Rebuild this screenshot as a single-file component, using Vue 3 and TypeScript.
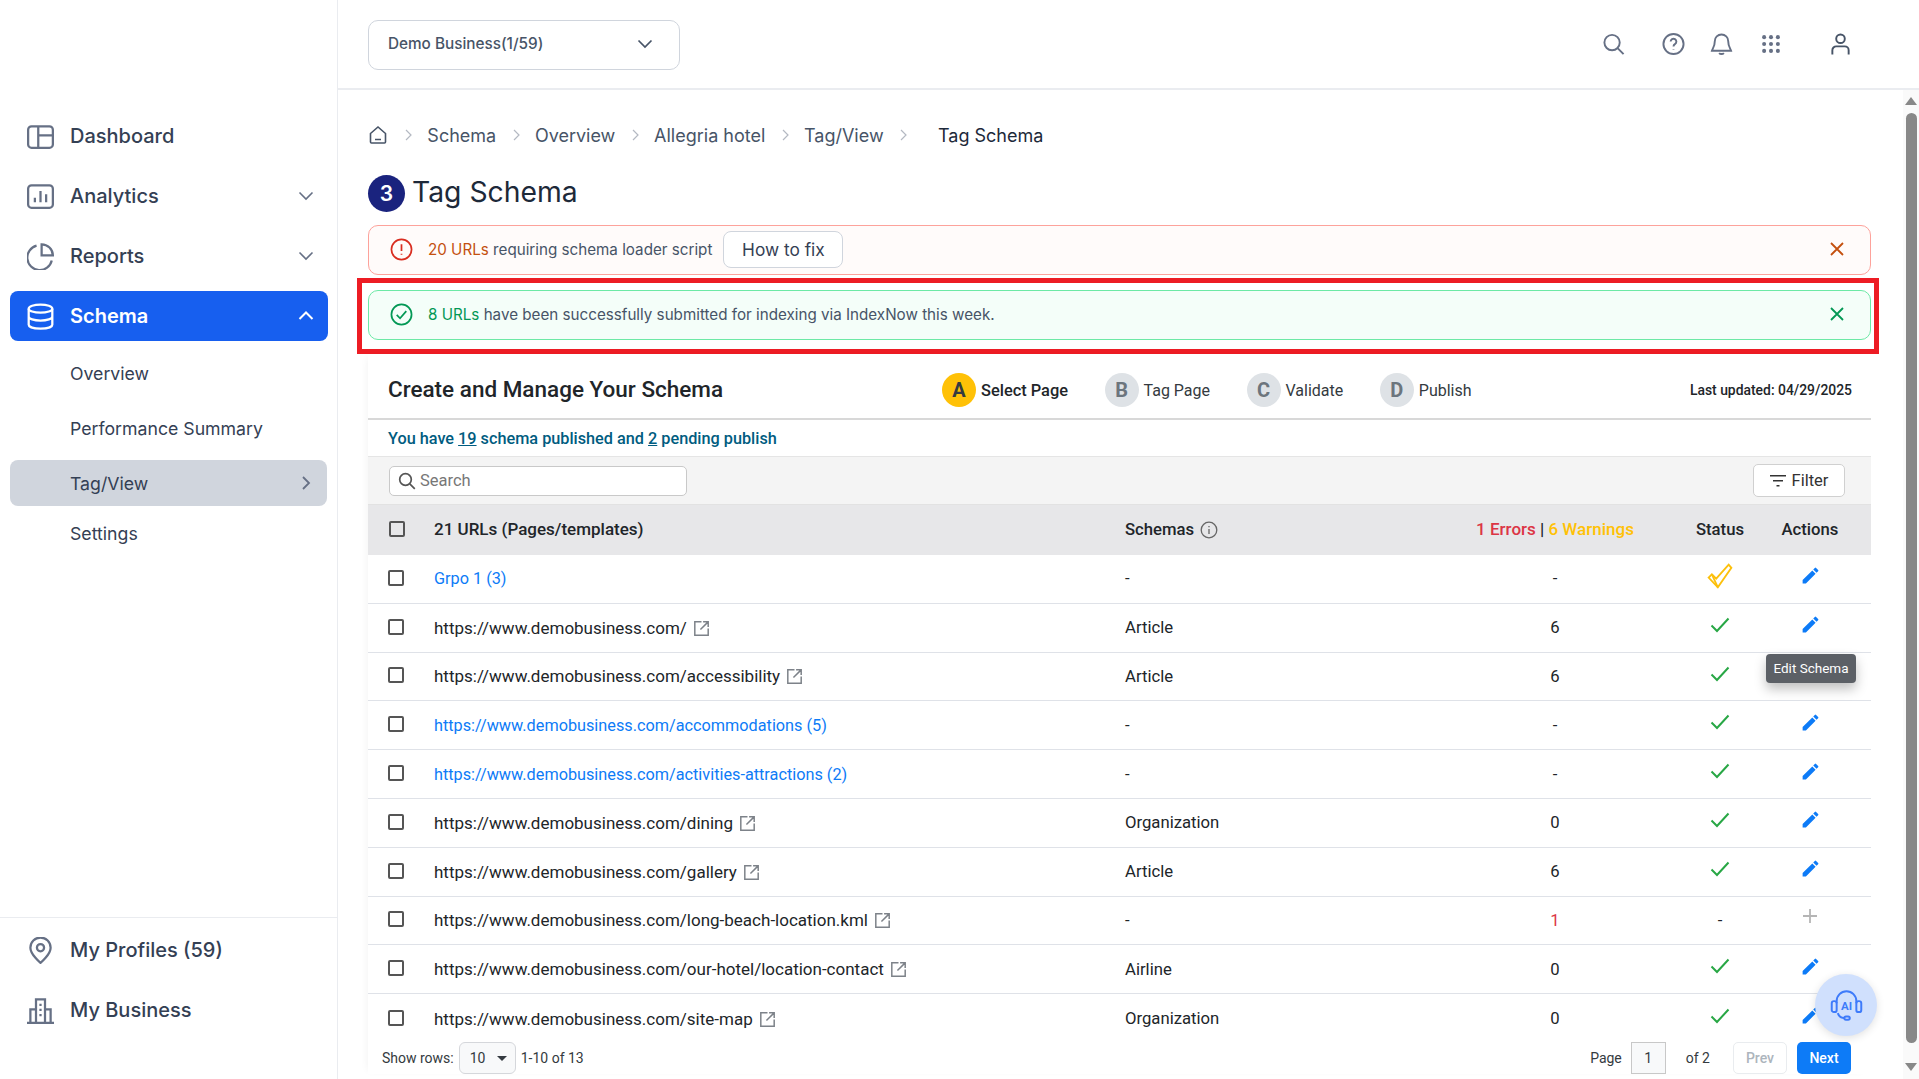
<script setup lang="ts">
interface Row {
  url: string
  link?: boolean
  ext?: boolean
  schema: string
  count: string
  countRed?: boolean
  status: 'ok' | 'warn' | 'none'
  action: 'edit' | 'add'
  tip?: boolean
}
const base = 'https://www.demobusiness.com'
const rows: Row[] = [
  { url: 'Grpo 1 (3)', link: true, schema: '-', count: '-', status: 'warn', action: 'edit' },
  { url: base + '/', ext: true, schema: 'Article', count: '6', status: 'ok', action: 'edit' },
  { url: base + '/accessibility', ext: true, schema: 'Article', count: '6', status: 'ok', action: 'edit', tip: true },
  { url: base + '/accommodations (5)', link: true, schema: '-', count: '-', status: 'ok', action: 'edit' },
  { url: base + '/activities-attractions (2)', link: true, schema: '-', count: '-', status: 'ok', action: 'edit' },
  { url: base + '/dining', ext: true, schema: 'Organization', count: '0', status: 'ok', action: 'edit' },
  { url: base + '/gallery', ext: true, schema: 'Article', count: '6', status: 'ok', action: 'edit' },
  { url: base + '/long-beach-location.kml', ext: true, schema: '-', count: '1', countRed: true, status: 'none', action: 'add' },
  { url: base + '/our-hotel/location-contact', ext: true, schema: 'Airline', count: '0', status: 'ok', action: 'edit' },
  { url: base + '/site-map', ext: true, schema: 'Organization', count: '0', status: 'ok', action: 'edit' },
]
const crumbs = ['Schema', 'Overview', 'Allegria hotel', 'Tag/View']
const steps = [
  { k: 'A', t: 'Select Page', on: true },
  { k: 'B', t: 'Tag Page', on: false },
  { k: 'C', t: 'Validate', on: false },
  { k: 'D', t: 'Publish', on: false },
]
</script>

<template>
  <div class="app">
    <svg class="defs" width="0" height="0" aria-hidden="true">
      <defs>
        <symbol id="pencil" viewBox="0 0 24 24"><path fill="#0d7bf7" d="M3 17.25V21h3.75L17.81 9.94l-3.75-3.75L3 17.25zM20.71 7.04a1 1 0 0 0 0-1.41l-2.34-2.34a1 1 0 0 0-1.41 0l-1.83 1.83 3.75 3.75 1.83-1.83z" /></symbol>
        <symbol id="ext" viewBox="0 0 16 16"><path fill="none" stroke="#7d8289" stroke-width="1.4" d="M8 1.7H1.7v12.6h12.6V8M9.5 1.7h4.8v4.8M14 2 7 9" /></symbol>
        <symbol id="check" viewBox="0 0 20 20"><path fill="none" stroke="#28a745" stroke-width="2" d="M1.5 10.5 7 16 18.5 3.5" /></symbol>
      </defs>
    </svg>

    <aside class="side">
      <nav class="nav">
        <div class="item">
          <svg class="ico" viewBox="0 0 24 24" fill="none" stroke="#667085" stroke-width="2"><rect x="1" y="3" width="22" height="19" rx="3"/><path d="M10 3v19M10 11h13"/></svg>
          <span>Dashboard</span>
        </div>
        <div class="item">
          <svg class="ico" viewBox="0 0 24 24" fill="none" stroke="#667085" stroke-width="2"><rect x="1" y="2" width="22" height="20" rx="3"/><path d="M7 17v-4M12 17V7M17 17v-7"/></svg>
          <span>Analytics</span>
          <svg class="chev" viewBox="0 0 16 16" fill="none" stroke="#667085" stroke-width="1.6"><path d="m1.5 4.5 6.5 6.5 6.5-6.5"/></svg>
        </div>
        <div class="item">
          <svg class="ico" viewBox="0 0 24 24" fill="none" stroke="#667085" stroke-width="2"><path d="M22 15.5A11 11 0 1 1 8.5 2.4"/><path d="M13 1.2A10 10 0 0 1 23 11H13z"/></svg>
          <span>Reports</span>
          <svg class="chev" viewBox="0 0 16 16" fill="none" stroke="#667085" stroke-width="1.6"><path d="m1.5 4.5 6.5 6.5 6.5-6.5"/></svg>
        </div>
        <div class="item active">
          <svg class="ico" viewBox="0 0 24 24" fill="none" stroke="#fff" stroke-width="2"><ellipse cx="12" cy="5" rx="10.500" ry="3.600"/><path d="M1.500 5v14.400c0 2 4.700 3.400 10.500 3.400s10.500-1.400 10.500-3.400V5M1.500 12c0 2 4.700 3.600 10.500 3.600s10.500-1.600 10.500-3.600"/></svg>
          <span>Schema</span>
          <svg class="chev" viewBox="0 0 16 16" fill="none" stroke="#fff" stroke-width="2"><path d="m1.500 11 6.500-6.500 6.500 6.500"/></svg>
        </div>
        <div class="subs">
          <div class="sub">Overview</div>
          <div class="sub">Performance Summary</div>
          <div class="sub cur">
            <span>Tag/View</span>
            <svg class="chevr" viewBox="0 0 16 16" fill="none" stroke="#667085" stroke-width="1.8"><path d="m5 2 6 6-6 6"/></svg>
          </div>
          <div class="sub last">Settings</div>
        </div>
      </nav>
      <div class="foot">
        <div class="item">
          <svg class="ico" viewBox="0 0 24 24" fill="none" stroke="#667085" stroke-width="2"><path d="M12 23s-9-7.500-9-13.500a9 9 0 0 1 18 0C21 15.500 12 23 12 23z"/><circle cx="12" cy="9.500" r="3.200"/></svg>
          <span>My Profiles (59)</span>
        </div>
        <div class="item">
          <svg class="ico" viewBox="0 0 24 24" fill="none" stroke="#667085" stroke-width="2"><path d="M0 23h24M3 23V11h5M21 23V11h-5M8 23V2h8v21M11 7h2M11 11.500h2M11 16h2"/></svg>
          <span>My Business</span>
        </div>
      </div>
    </aside>

    <div class="main">
      <header class="top">
        <div class="biz">
          <span>Demo Business(1/59)</span>
          <svg width="16" height="16" viewBox="0 0 16 16" fill="none" stroke="#475467" stroke-width="1.700"><path d="m1.500 4.500 6.500 6.500 6.500-6.500"/></svg>
        </div>
        <div class="tools">
          <svg class="t t1" viewBox="0 0 24 24" fill="none" stroke="#667085" stroke-width="2"><circle cx="10.500" cy="10.500" r="8"/><path d="m16.500 16.500 6 6"/></svg>
          <svg class="t t2" viewBox="0 0 24 24" fill="none" stroke="#667085" stroke-width="2"><circle cx="12" cy="12" r="10.500"/><path d="M9 9.500a3 3 0 1 1 4.500 2.600c-1 .6-1.500 1.200-1.500 2.400M12 17.500v.5"/></svg>
          <svg class="t t3" viewBox="0 0 24 24" fill="none" stroke="#667085" stroke-width="2"><path d="M12 2a7 7 0 0 0-7 7c0 6-2.500 8-3 10h20c-.5-2-3-4-3-10a7 7 0 0 0-7-7zM9.500 21.500c1.200 1.300 3.800 1.300 5 0"/></svg>
          <svg class="t t4" viewBox="0 0 24 24" fill="#667085"><circle cx="4.500" cy="4.500" r="2.200"/><circle cx="12" cy="4.500" r="2.200"/><circle cx="19.500" cy="4.500" r="2.200"/><circle cx="4.500" cy="12" r="2.200"/><circle cx="12" cy="12" r="2.200"/><circle cx="19.500" cy="12" r="2.200"/><circle cx="4.500" cy="19.500" r="2.200"/><circle cx="12" cy="19.500" r="2.200"/><circle cx="19.500" cy="19.500" r="2.200"/></svg>
          <svg class="t t5" viewBox="0 0 24 24" fill="none" stroke="#475467" stroke-width="2"><circle cx="12" cy="6.500" r="4.500"/><path d="M3.500 23v-4.500a4 4 0 0 1 4-4h9a4 4 0 0 1 4 4V23"/></svg>
        </div>
      </header>

      <div class="body">
        <div class="content">
          <div class="crumbs">
            <svg class="home" viewBox="0 0 20 20" fill="none" stroke="#475467" stroke-width="1.600"><path d="M2.500 8.500 10 2l7.500 6.500V17a1 1 0 0 1-1 1h-13a1 1 0 0 1-1-1zM7 14.500h6"/></svg>
            <template v-for="c in crumbs" :key="c">
              <svg class="sep" viewBox="0 0 10 14" fill="none" stroke="#b4b9c2" stroke-width="1.200"><path d="m3 2 5 5-5 5"/></svg>
              <span class="crumb">{{ c }}</span>
            </template>
            <svg class="sep sep-last" viewBox="0 0 10 14" fill="none" stroke="#b4b9c2" stroke-width="1.200"><path d="m3 2 5 5-5 5"/></svg>
            <span class="crumb now">Tag Schema</span>
          </div>

          <div class="heading">
            <span class="num">3</span>
            <h1>Tag Schema</h1>
          </div>

          <div class="alert bad">
            <svg class="a-ico" viewBox="0 0 24 24" fill="none" stroke="#d92d20" stroke-width="1.800"><circle cx="12" cy="12" r="10.500"/><path d="M12 6.500v7M12 16.500v1"/></svg>
            <span class="a-text"><b>20 URLs</b> requiring schema loader script</span>
            <button class="fix">How to fix</button>
            <svg class="a-x" viewBox="0 0 16 16" fill="none" stroke="#c4500f" stroke-width="1.800"><path d="m2 2 12 12M14 2 2 14"/></svg>
          </div>
          <div class="alert good">
            <svg class="a-ico" viewBox="0 0 24 24" fill="none" stroke="#039855" stroke-width="1.800"><circle cx="12" cy="12" r="10.500"/><path d="m7 12.500 3.500 3.500L17 8.500"/></svg>
            <span class="a-text"><b>8 URLs</b> have been successfully submitted for indexing via IndexNow this week.</span>
            <svg class="a-x" viewBox="0 0 16 16" fill="none" stroke="#039855" stroke-width="1.800"><path d="m2 2 12 12M14 2 2 14"/></svg>
          </div>
          <div class="mark"></div>

          <section class="card">
            <div class="c-head">
              <h2>Create and Manage Your Schema</h2>
              <div class="steps">
                <div v-for="s in steps" :key="s.k" class="step" :class="{ on: s.on }">
                  <span class="dot">{{ s.k }}</span>
                  <span>{{ s.t }}</span>
                </div>
              </div>
              <div class="updated">Last updated: 04/29/2025</div>
            </div>
            <div class="summary">You have <u>19</u> schema published and <u>2</u> pending publish</div>
            <div class="toolbar">
              <div class="search">
                <svg width="18" height="18" viewBox="0 0 18 18" fill="none" stroke="#555" stroke-width="1.700"><circle cx="7.500" cy="7.500" r="5.800"/><path d="m11.800 11.800 5 5"/></svg>
                <span>Search</span>
              </div>
              <button class="filter">
                <svg width="16" height="12" viewBox="0 0 16 12" fill="#333"><path d="M0 0h16v1.600H0zM3 5h10v1.600H3zM6.500 10h3v1.600h-3z"/></svg>
                Filter
              </button>
            </div>
            <div class="grid thead">
              <span class="box hbox"></span>
              <span class="big">21 URLs (Pages/templates)</span>
              <span class="schemas">Schemas
                <svg width="18" height="18" viewBox="0 0 18 18" fill="none" stroke="#666" stroke-width="1.300"><circle cx="9" cy="9" r="7.800"/><path d="M9 8v5M9 5v1.200"/></svg>
              </span>
              <span class="ctr big"><i class="red">1 Errors</i> | <i class="amber">6 Warnings</i></span>
              <span class="ctr">Status</span>
              <span class="ctr">Actions</span>
            </div>
            <div v-for="r in rows" :key="r.url" class="grid row">
              <span class="box"></span>
              <span class="url" :class="{ link: r.link }">{{ r.url }}
                <svg v-if="r.ext" class="ext"><use href="#ext" /></svg>
              </span>
              <span>{{ r.schema }}</span>
              <span class="ctr" :class="{ redn: r.countRed }">{{ r.count }}</span>
              <span class="ctr">
                <svg v-if="r.status === 'ok'" class="stat"><use href="#check" /></svg>
                <svg v-else-if="r.status === 'warn'" class="stat warn" viewBox="0 0 24 24" fill="none" stroke="#fcc00c" stroke-width="1.700"><path d="m1.500 13.500 3-3 4 4L20 1.500l2.500 3L10 22.500z"/><path d="m4.500 10.500 5.500 12"/></svg>
                <template v-else>-</template>
              </span>
              <span class="ctr act">
                <svg v-if="r.action === 'edit'" class="pen"><use href="#pencil" /></svg>
                <svg v-else class="plus" viewBox="0 0 16 16" stroke="#b5b5b5" stroke-width="1.800"><path d="M8 1v14M1 8h14"/></svg>
                <span v-if="r.tip" class="tip">Edit Schema</span>
              </span>
            </div>
            <div class="pager">
              <span>Show rows:</span>
              <span class="rows-sel">10<i class="caret"></i></span>
              <span class="range">1-10 of 13</span>
              <span class="pg">Page</span>
              <span class="pg-in">1</span>
              <span class="of">of 2</span>
              <button class="prev">Prev</button>
              <button class="next">Next</button>
            </div>
            <div class="ai">
              <svg width="35" height="35" viewBox="0 0 32 32" fill="none" stroke="#3e7bfa" stroke-width="1.800"><path d="M7 14v-2a9 9 0 0 1 18 0v2"/><rect x="2.500" y="12" width="4.500" height="10" rx="2"/><rect x="25" y="12" width="4.500" height="10" rx="2"/><path d="M8 23c1 3 3 4.500 6 4.500"/><rect x="14" y="26" width="5" height="3" rx="1.500"/><text x="16" y="20" font-size="10.500" font-weight="700" fill="#3e7bfa" stroke="none" text-anchor="middle" font-family="Roboto, sans-serif">AI</text></svg>
            </div>
          </section>
        </div>
        <div class="scroll">
          <i class="up"></i>
          <i class="thumb"></i>
          <i class="down"></i>
        </div>
      </div>
    </div>
  </div>
</template>

<style>
html, body { margin: 0; overflow: hidden; background: #fff; }
</style>

<style scoped>
* { box-sizing: border-box; }
.defs { position: absolute; }
.app { display: flex; width: 1919px; height: 1079px; overflow: hidden; font-family: Inter, sans-serif; color: #344054; background: #fff; }
.side { width: 338px; flex: none; border-right: 1px solid #eaecf0; display: flex; flex-direction: column; justify-content: space-between; }
.nav { padding: 111px 9px 0 10px; display: flex; flex-direction: column; gap: 10px; }
.item { height: 50px; display: flex; align-items: center; padding-left: 17px; font-size: 20px; font-weight: 500; border-radius: 8px; color: #344054; }
.ico { width: 27px; height: 27px; margin-right: 16px; flex: none; }
.chev { width: 16px; height: 16px; margin-left: auto; margin-right: 14px; }
.active { background: #175fef; color: #fff; font-weight: 600; }
.subs { display: flex; flex-direction: column; margin-top: -1px; }
.sub { height: 46px; display: flex; align-items: center; padding-left: 60px; font-size: 17.700px; color: #344054; margin-bottom: 9px; }
.sub.cur { background: #d0d5dd; border-radius: 8px; margin-right: 1px; }
.sub.last { margin-top: -5px; }
.chevr { width: 16px; height: 16px; margin-left: auto; margin-right: 13px; }
.foot { border-top: 1px solid #eaecf0; padding: 7px 9px 44px 10px; display: flex; flex-direction: column; gap: 10px; }

.main { flex: 1; min-width: 0; display: flex; flex-direction: column; }
.top { height: 90px; flex: none; border-bottom: 2px solid #eaecf0; display: flex; align-items: flex-start; padding: 20px 0 0 30px; }
.biz { width: 312px; height: 50px; border: 1.500px solid #d0d5dd; border-radius: 10px; display: flex; align-items: center; justify-content: space-between; padding: 0 26px 3px 19px; font-size: 15.300px; font-weight: 500; color: #475467; }
.tools { margin-left: auto; display: flex; align-items: center; height: 48px; margin-right: 67px; }
.t { width: 23px; height: 24px; flex: none; }
.t2 { margin-left: 37px; }
.t3 { margin-left: 25px; }
.t4 { margin-left: 27px; width: 22px; height: 22px; }
.t5 { margin-left: 47px; }

.body { flex: 1; display: flex; min-height: 0; }
.content { position: relative; flex: 1; min-width: 0; padding: 0 32px 0 30px; }
.crumbs { height: 20px; margin-top: 35px; display: flex; align-items: center; font-size: 18px; color: #475467; }
.home { width: 20px; height: 20px; margin-right: 15px; flex: none; }
.sep { width: 10px; height: 14px; flex: none; margin-right: 14.350px; }
.crumb { margin-right: 14.350px; white-space: nowrap; color: #475467; }
.sep-last { margin-right: 30px; }
.now { color: #1d2939; }
.heading { display: flex; align-items: center; gap: 7px; margin-top: 24px; height: 46px; }
.num { width: 37px; height: 37px; border-radius: 50%; background: #1a237e; color: #fff; display: flex; align-items: center; justify-content: center; font-size: 21px; font-weight: 600; margin-top: 2px; }
h1 { margin: 0; font-size: 28.300px; font-weight: 400; color: #1d2939; }
.alert { height: 50px; border-radius: 10px; border: 1.500px solid; display: flex; align-items: center; padding: 0 25px 2px 21px; font-size: 15.200px; color: #475467; margin-top: 15px; }
.heading + .alert { margin-top: 10px; }
.bad { background: #fffbfa; border-color: #fda29b; }
.good { background: #f4fef9; border-color: #6ce9a6; }
.a-ico { width: 23px; height: 23px; margin-right: 15px; flex: none; }
.a-text { margin-right: 11px; }
.bad b { font-weight: 400; color: #c4500f; }
.good b { font-weight: 400; color: #039855; }
.fix { height: 37px; width: 120px; background: #fff; border: 1.500px solid #d0d5dd; border-radius: 8px; font: 400 17.300px Inter, sans-serif; color: #344054; }
.a-x { width: 16px; height: 16px; margin-left: auto; }
.mark { position: absolute; left: 19px; top: 188px; width: 1522px; height: 76px; border: 5px solid #ed1c24; pointer-events: none; }

.card { position: relative; margin-top: 14px; font-family: Roboto, sans-serif; color: #212529; font-size: 16.700px; box-shadow: -4px 0 8px -4px rgba(0,0,0,.06); }
.c-head { height: 66px; display: flex; align-items: center; padding: 5px 19px 0 20px; border-bottom: 2px solid #d8d8d8; }
h2 { margin: 0; width: 554px; flex: none; font-size: 22.500px; font-weight: 500; color: #212529; white-space: nowrap; }
.steps { display: flex; gap: 36.500px; margin-top: 3px; }
.step { display: flex; align-items: center; gap: 5px; font-size: 16px; color: #343a40; }
.step.on { font-size: 16.400px; font-weight: 500; color: #212529; }
.dot { width: 34px; height: 34px; border-radius: 50%; background: #dee2e6; color: #6c757d; font-size: 20px; font-weight: 700; display: flex; align-items: center; justify-content: center; }
.on .dot { background: #ffc107; color: #343a40; }
.updated { margin-left: auto; font-size: 13.900px; font-weight: 500; color: #212529; margin-top: 3px; }
.summary { height: 37px; display: flex; align-items: center; white-space: pre-wrap; padding-left: 20px; font-size: 16.250px; font-weight: 500; color: #005c80; border-bottom: 1.500px solid #e5e5e5; }
.toolbar { height: 48px; background: #f4f4f4; border-bottom: 1.500px solid #e2e2e2; display: flex; align-items: center; justify-content: space-between; padding: 0 26px 0 21px; }
.search { width: 298px; height: 30px; background: #fff; border: 1px solid #c9c9c9; border-radius: 5px; display: flex; align-items: center; gap: 4px; padding-left: 8px; font-size: 16.500px; color: #777; }
.filter { width: 92px; height: 33px; background: #fff; border: 1px solid #d0d0d0; border-radius: 5px; display: flex; align-items: center; justify-content: center; gap: 6px; font: 400 16.500px Roboto, sans-serif; color: #333; }
.grid { display: grid; grid-template-columns: 66px 691px 320px 220px 110px 70px; align-items: center; }
.thead { height: 50px; padding-bottom: 2px; background: #e7e7e9; font-weight: 500; }
.big { font-size: 17px; }
.row { height: 48.800px; border-bottom: 1.500px solid #dfe2e8; }
.row:nth-last-child(3) { border-bottom: none; }
.box { width: 16px; height: 16px; border: 2px solid #555; border-radius: 2px; margin-left: 20px; margin-top: -2px; }
.hbox { margin-left: 21px; margin-top: 0; }
.url { white-space: nowrap; font-size: 17px; }
.link { color: #0d7bf7; font-size: 16.250px; }
.ext { width: 17px; height: 17px; margin-left: 2px; vertical-align: -3px; }
.schemas { display: flex; align-items: center; gap: 6px; }
.schemas svg { margin-top: 2px; }
.ctr { text-align: center; }
.thead i { font-style: normal; }
.red, .redn { color: #dc3545; }
.amber { color: #ffc107; }
.stat { width: 20px; height: 20px; margin-top: -8px; display: inline-block; vertical-align: middle; }
.warn { width: 26px; height: 26px; margin-top: -8px; }
.act { position: relative; }
.pen { width: 21px; height: 21px; margin-top: -8px; display: inline-block; vertical-align: middle; }
.plus { width: 16px; height: 16px; margin-top: -11px; display: inline-block; vertical-align: middle; }
.tip { position: absolute; left: -9px; top: -13px; width: 90px; height: 29px; border-radius: 4px; background: #5c6066; color: #fff; font-size: 13.500px; display: flex; align-items: center; justify-content: center; box-shadow: 0 6px 12px rgba(0,0,0,.25); z-index: 2; }
.pager { height: 31px; display: flex; align-items: center; padding: 0 20px 0 14px; font-size: 14px; color: #343a40; }
.rows-sel { width: 57px; height: 32px; flex: none; border: 1px solid #d5d7db; border-radius: 6px; background: #f8f9fa; margin-left: 5px; display: flex; align-items: center; padding-left: 10px; gap: 12px; }
.caret { width: 0; height: 0; border: 5px solid transparent; border-top: 5px solid #343a40; border-bottom: none; }
.range { margin-left: 5px; }
.pg { margin-left: auto; }
.pg-in { width: 35px; height: 32px; flex: none; border: 1px solid #c8c8c8; background: #f8f9fa; margin-left: 9px; display: flex; align-items: center; justify-content: center; }
.of { margin-left: 20px; }
.prev, .next { width: 54px; height: 32px; flex: none; border-radius: 5px; font: 500 14px Roboto, sans-serif; }
.prev { margin-left: 23px; background: #fff; border: 1px solid #e9ecef; color: #adb5bd; }
.next { margin-left: 10px; background: #0d7bf7; border: none; color: #fff; }
.ai { position: absolute; right: -6px; top: 620px; width: 62px; height: 62px; border-radius: 50%; background: #d0e0fd; display: flex; align-items: center; justify-content: center; box-shadow: 0 2px 8px rgba(0,0,0,.12); z-index: 3; }

.scroll { width: 16px; flex: none; background: #fafafa; position: relative; display: flex; flex-direction: column; align-items: center; }
.up { width: 0; height: 0; margin-top: 7px; border: 6px solid transparent; border-bottom: 8px solid #888; border-top: none; }
.thumb { width: 11px; height: 930px; margin-top: 8px; background: #888; border-radius: 6px; }
.down { width: 0; height: 0; margin-top: 20px; border: 6px solid transparent; border-top: 8px solid #888; border-bottom: none; }
</style>
